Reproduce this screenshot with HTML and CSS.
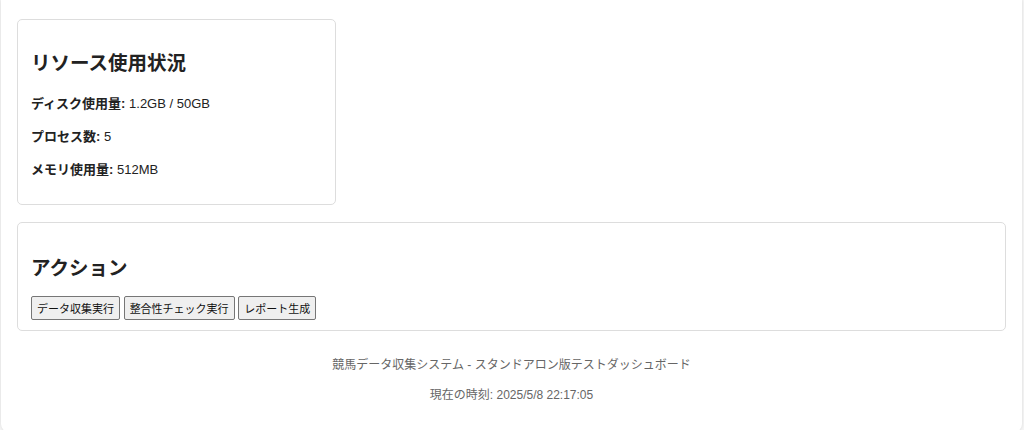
FILE: index.html
```html
<!DOCTYPE html>
<html lang="ja">
<head>
    <meta charset="UTF-8">
    <meta name="viewport" content="width=device-width, initial-scale=1.0">
    <title>競馬データ収集システム - テストダッシュボード</title>
    <link rel="stylesheet" href="styles.css">
</head>
<body>
    <div class="container">
        <div class="stats-grid">
            <div class="card">
                <h2>リソース使用状況</h2>
                <p><strong>ディスク使用量:</strong> 1.2GB / 50GB</p>
                <p><strong>プロセス数:</strong> 5</p>
                <p><strong>メモリ使用量:</strong> 512MB</p>
            </div>
        </div>

        <div class="card actions">
            <h2>アクション</h2>
            <button type="button">データ収集実行</button>
            <button type="button">整合性チェック実行</button>
            <button type="button">レポート生成</button>
        </div>

        <div class="footer">
            <p>競馬データ収集システム - スタンドアロン版テストダッシュボード</p>
            <p>現在の時刻: <span id="now">2025/5/8 22:17:05</span></p>
        </div>
    </div>
</body>
</html>
```

FILE: styles.css
```css
body {
    font-family: Arial, "Liberation Sans", "Noto Sans CJK JP", sans-serif;
    margin: 0;
    padding: 0 2px 2px 1px;
    background-color: #f5f5f5;
    color: #222;
    font-size: 13px;
}
.container {
    background-color: white;
    padding: 19px 16px 18px;
    border-radius: 0 0 8px 8px;
    box-shadow: 0 0 3px rgba(0,0,0,0.12);
}
.stats-grid {
    display: grid;
    grid-template-columns: repeat(3, 1fr);
    gap: 16px;
    margin-bottom: 17px;
}
.card {
    border: 1px solid #ddd;
    border-radius: 5px;
    padding: 15px 13px 12px;
}
.card h2 {
    font-size: 19.5px;
    margin: 12px 0 17px;
}
.card p {
    margin: 14px 0;
}
.actions {
    padding-bottom: 10px;
}
.actions h2 {
    margin-top: 14px;
    margin-bottom: 15px;
}
button {
    font-family: Arial, "Liberation Sans", "Noto Sans CJK JP", sans-serif;
    font-size: 11px;
    padding: 3px 5px;
    border: 1px solid #767676;
    border-radius: 2px;
    background-color: #efefef;
    color: #111;
}
.footer {
    text-align: center;
    color: #666;
    font-size: 12px;
    margin-top: 24px;
}
.footer p {
    margin: 12.5px 0;
}
```
